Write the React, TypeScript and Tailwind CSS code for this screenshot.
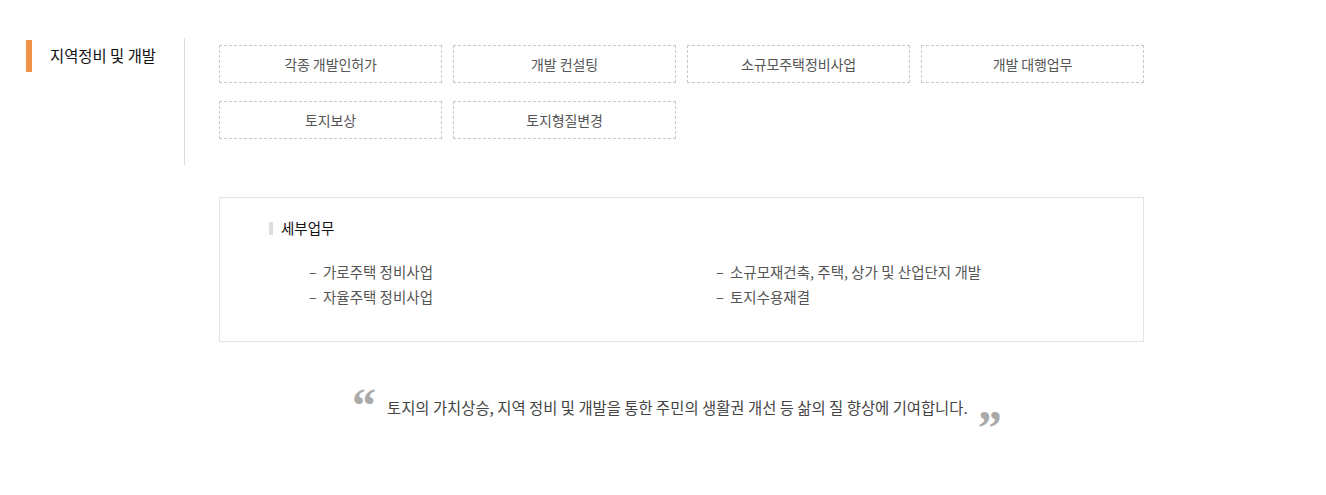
const KR = { fontFamily: '"Noto Sans CJK KR", "Noto Sans", sans-serif' };
const SERIF = { fontFamily: '"Liberation Serif", serif' };

const services = [
    '각종 개발인허가',
    '개발 컨설팅',
    '소규모주택정비사업',
    '개발 대행업무',
    '토지보상',
    '토지형질변경',
];

const leftTasks = ['가로주택 정비사업', '자율주택 정비사업'];
const rightTasks = ['소규모재건축, 주택, 상가 및 산업단지 개발', '토지수용재결'];

function TaskList({ items }: { items: string[] }) {
    return (
        <ul className="flex flex-col">
            {items.map((t, i) => (
                <li key={i} className="flex items-center h-[25px] text-[14.5px] text-[#555]">
                    <span className="w-[14px]">–</span>
                    {t}
                </li>
            ))}
        </ul>
    );
}

export default function App() {
    return (
        <div className="w-[1326px] h-[495px] bg-white" style={KR}>
            <div className="flex pt-[38px] pl-[26px]">
                <div className="w-[158px] pt-[2px]">
                    <div className="flex items-center h-[32px] border-l-[6px] border-[#f0914a] pl-[18px]">
                        <h2 className="text-[15.4px] text-[#111] font-normal">지역정비 및 개발</h2>
                    </div>
                </div>
                <div className="border-l border-[#dcdcdc] h-[127px] pl-[34px] pt-[7px]">
                    <div className="grid grid-cols-[repeat(4,223px)] gap-x-[11px] gap-y-[18px]">
                        {services.map((s, i) => (
                            <div
                                key={i}
                                className="h-[38px] flex items-center justify-center border border-dashed border-[#c8c8c8] text-[14px] text-[#555] tracking-[-0.1px]"
                            >
                                {s}
                            </div>
                        ))}
                    </div>
                </div>
            </div>

            <div className="ml-[219px] mt-[32px] w-[925px] border border-[#e3e3e3] pl-[49px] pt-[20px] pb-[32px]">
                <div className="flex items-center h-[20px]">
                    <span className="w-[4px] h-[13px] bg-[#dddddd] mr-[8px]" />
                    <span className="text-[14.5px] text-[#111]">세부업무</span>
                </div>
                <div className="flex mt-[21px] pl-[40px]">
                    <div className="w-[407px]">
                        <TaskList items={leftTasks} />
                    </div>
                    <TaskList items={rightTasks} />
                </div>
            </div>

            <div className="flex items-start ml-[352px] mt-[46px] h-[44px]">
                <span className="h-[48px] mt-[-6px] text-[48px] leading-none font-bold text-[#aaaaaa]" style={SERIF}>
                    &ldquo;
                </span>
                <p className="mt-[8px] ml-[11px] text-[15.4px] leading-[23px] text-[#444]">
                    토지의 가치상승, 지역 정비 및 개발을 통한 주민의 생활권 개선 등 삶의 질 향상에 기여합니다.
                </p>
                <span className="h-[48px] mt-[16px] ml-[10px] text-[48px] leading-none font-bold text-[#aaaaaa]" style={SERIF}>
                    &rdquo;
                </span>
            </div>
        </div>
    );
}
